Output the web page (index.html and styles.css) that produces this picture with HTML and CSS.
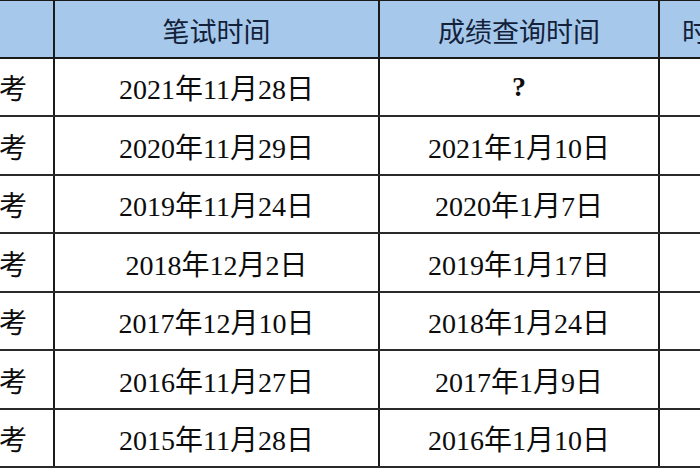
FILE: index.html
```html
<!DOCTYPE html>
<html lang="zh-CN">
<head>
<meta charset="utf-8">
<title>考试时间表</title>
<link rel="stylesheet" href="styles.css">
</head>
<body>
<div class="viewport">
<table class="exam-table">
  <thead>
    <tr class="row-head">
      <th class="c-name">考试</th>
      <th class="c-test">笔试时间</th>
      <th class="c-score">成绩查询时间</th>
      <th class="c-extra">时间</th>
    </tr>
  </thead>
  <tbody>
    <tr class="r-a"><td class="c-name">全国统考</td><td>2021年11月28日</td><td class="q">?</td><td></td></tr>
    <tr class="r-b"><td class="c-name">全国统考</td><td>2020年11月29日</td><td>2021年1月10日</td><td></td></tr>
    <tr class="r-a"><td class="c-name">全国统考</td><td>2019年11月24日</td><td>2020年1月7日</td><td></td></tr>
    <tr class="r-b"><td class="c-name">全国统考</td><td>2018年12月2日</td><td>2019年1月17日</td><td></td></tr>
    <tr class="r-a"><td class="c-name">全国统考</td><td>2017年12月10日</td><td>2018年1月24日</td><td></td></tr>
    <tr class="r-b"><td class="c-name">全国统考</td><td>2016年11月27日</td><td>2017年1月9日</td><td></td></tr>
    <tr class="r-a"><td class="c-name">全国统考</td><td>2015年11月28日</td><td>2016年1月10日</td><td></td></tr>
  </tbody>
</table>
</div>
</body>
</html>
```
FILE: styles.css
```css
html, body {
  margin: 0;
  padding: 0;
  background: #ffffff;
}
.viewport {
  width: 700px;
  height: 470px;
  overflow: hidden;
}
.exam-table {
  border-collapse: collapse;
  table-layout: fixed;
  margin-left: -113px;
  margin-top: -1px;
  width: 932px;
}
.exam-table th,
.exam-table td {
  border: 2px solid #1a1a1a;
  padding: 0;
  text-align: center;
  white-space: nowrap;
  overflow: hidden;
}
.exam-table th {
  background: #a6c8ea;
  color: #13223a;
  font-family: "Noto Sans CJK SC", "Noto Sans", sans-serif;
  font-weight: normal;
  font-size: 27px;
  height: 58px;
  padding-top: 3px;
  box-sizing: border-box;
}
.exam-table td {
  color: #0c0c0c;
  font-family: "Liberation Serif", "Noto Sans CJK SC", serif;
  font-size: 28px;
  border-top-color: #2a2a2a;
  border-bottom-color: #2a2a2a;
}
.r-a td { height: 56px; }
.r-b td { height: 57px; }
.c-name { width: 166px; }
.c-test { width: 325px; }
.c-score { width: 280px; }
.c-extra { width: 161px; }
.exam-table th.c-extra {
  text-align: left;
  padding-left: 22px;
}
.q {
  font-weight: bold;
  font-size: 27px;
}
```
